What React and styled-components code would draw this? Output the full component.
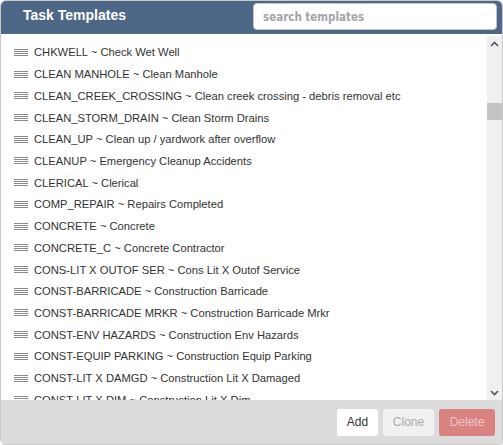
import React from 'react';
import styled, { createGlobalStyle } from 'styled-components';

const GlobalStyle = createGlobalStyle`
  html, body {
    margin: 0;
    padding: 0;
    background: #ffffff;
  }
  body {
    font-family: "Liberation Sans", Arial, sans-serif;
  }
`;

const templates = [
  'CHKWELL ~ Check Wet Well',
  'CLEAN MANHOLE ~ Clean Manhole',
  'CLEAN_CREEK_CROSSING ~ Clean creek crossing - debris removal etc',
  'CLEAN_STORM_DRAIN ~ Clean Storm Drains',
  'CLEAN_UP ~ Clean up / yardwork after overflow',
  'CLEANUP ~ Emergency Cleanup Accidents',
  'CLERICAL ~ Clerical',
  'COMP_REPAIR ~ Repairs Completed',
  'CONCRETE ~ Concrete',
  'CONCRETE_C ~ Concrete Contractor',
  'CONS-LIT X OUTOF SER ~ Cons Lit X Outof Service',
  'CONST-BARRICADE ~ Construction Barricade',
  'CONST-BARRICADE MRKR ~ Construction Barricade Mrkr',
  'CONST-ENV HAZARDS ~ Construction Env Hazards',
  'CONST-EQUIP PARKING ~ Construction Equip Parking',
  'CONST-LIT X DAMGD ~ Construction Lit X Damaged',
  'CONST-LIT X DIM ~ Construction Lit X Dim',
];

const Grip = () => (
  <svg width="14" height="9" viewBox="0 0 14 9">
    <g stroke="#8a8a8a" strokeWidth="1">
      <line x1="0" y1="1.5" x2="14" y2="1.5" />
      <line x1="0" y1="3.5" x2="14" y2="3.5" />
      <line x1="0" y1="5.5" x2="14" y2="5.5" />
      <line x1="0" y1="7.5" x2="14" y2="7.5" />
    </g>
  </svg>
);

const Chevron = ({ up }) => (
  <svg width="9" height="6" viewBox="0 0 9 6">
    <path
      d={up ? 'M1 5 L4.5 1.5 L8 5' : 'M1 1 L4.5 4.5 L8 1'}
      fill="none"
      stroke="#555"
      strokeWidth="1.6"
    />
  </svg>
);

const App = () => {
  return (
    <>
      <GlobalStyle />
      <Panel>
        <Header>
          <Title>Task Templates</Title>
          <Search placeholder="search templates" />
        </Header>
        <Body>
          <Items>
            {templates.map((t) => (
              <Row key={t}>
                <Grip />
                <Label>{t}</Label>
              </Row>
            ))}
          </Items>
          <ScrollTrack>
            <Arrow>
              <Chevron up />
            </Arrow>
            <Rail>
              <Thumb />
            </Rail>
            <Arrow>
              <Chevron />
            </Arrow>
          </ScrollTrack>
        </Body>
        <Footer>
          <Button variant="add">Add</Button>
          <Button variant="clone">Clone</Button>
          <Button variant="delete">Delete</Button>
        </Footer>
      </Panel>
    </>
  );
};

const Panel = styled.div`
  width: 503px;
  height: 445px;
  box-sizing: border-box;
  display: flex;
  flex-direction: column;
  border: 1px solid #c9c9c9;
  border-radius: 6px;
  overflow: hidden;
  background: #fff;
  box-shadow: 1px 1px 2px rgba(0, 0, 0, 0.15);
`;

const Header = styled.div`
  height: 34px;
  flex: none;
  display: flex;
  align-items: center;
  justify-content: space-between;
  padding: 0 6px 0 23px;
  margin: -1px -1px 0;
  background: #4e6787;
`;

const Title = styled.div`
  color: #ffffff;
  font-size: 14px;
  font-weight: bold;
  margin-top: -4px;
`;

const Search = styled.input`
  width: 244px;
  height: 27px;
  box-sizing: border-box;
  margin-top: -1px;
  border: 1px solid #c5c5c5;
  border-radius: 4px;
  padding: 0 9px;
  font-family: "DejaVu Sans Condensed", "Liberation Sans", sans-serif;
  font-size: 11.5px;
  color: #333;
  outline: none;
  &::placeholder {
    color: #a5a5a5;
    font-weight: bold;
  }
`;

const Body = styled.div`
  flex: 1;
  min-height: 0;
  display: flex;
`;

const Items = styled.div`
  flex: 1;
  overflow: hidden;
  padding: 7.5px 0 0 13px;
`;

const Row = styled.div`
  height: 21.73px;
  display: flex;
  align-items: center;
  gap: 6px;
  white-space: nowrap;
`;

const Label = styled.span`
  font-size: 11.2px;
  color: #333333;
`;

const ScrollTrack = styled.div`
  width: 15px;
  flex: none;
  margin-top: 2px;
  display: flex;
  flex-direction: column;
  background: #f0f0f0;
`;

const Arrow = styled.div`
  height: 15px;
  flex: none;
  display: flex;
  align-items: center;
  justify-content: center;
`;

const Rail = styled.div`
  flex: 1;
  padding-top: 52px;
`;

const Thumb = styled.div`
  height: 17px;
  background: #c4c4c4;
`;

const Footer = styled.div`
  height: 44px;
  flex: none;
  display: flex;
  align-items: center;
  justify-content: flex-end;
  gap: 5px;
  padding: 0 7px 0 0;
  background: #dcdcdc;
`;

const variants = {
  add: { bg: '#ffffff', color: '#333333', width: '41px' },
  clone: { bg: '#f1f1f1', color: '#a9a9a9', width: '51px' },
  delete: { bg: '#d98282', color: '#f4c4c4', width: '56px' },
};

const Button = styled.button`
  width: ${(p) => variants[p.variant].width};
  height: 27px;
  padding: 0;
  border: none;
  border-radius: 3px;
  background: ${(p) => variants[p.variant].bg};
  color: ${(p) => variants[p.variant].color};
  font-family: "Liberation Sans", Arial, sans-serif;
  font-size: 12px;
  cursor: pointer;
`;

export default App;
